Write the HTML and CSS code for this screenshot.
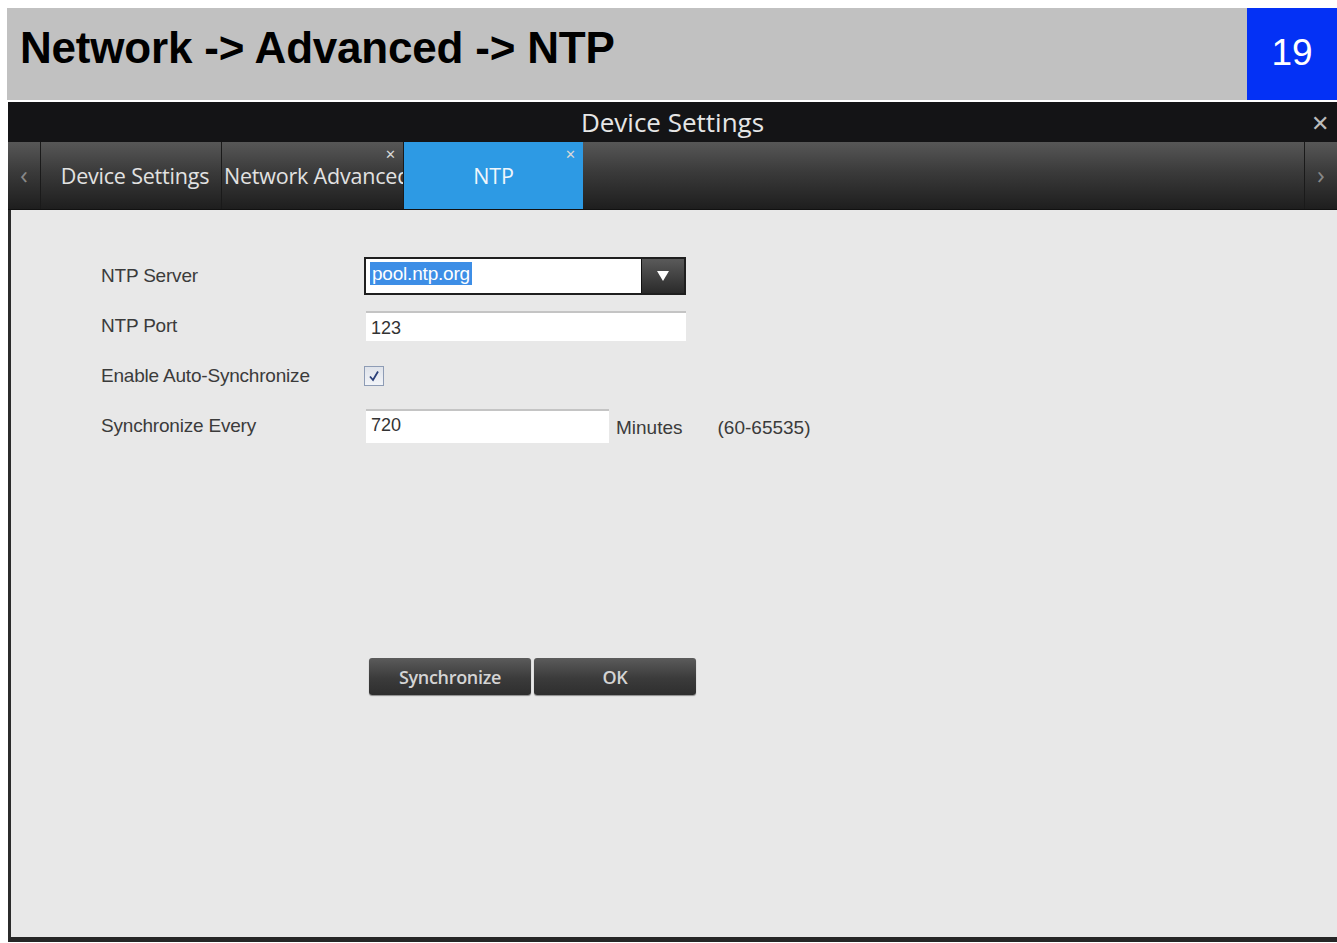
FILE: index.html
```html
<!DOCTYPE html>
<html lang="en">
<head>
  <meta charset="UTF-8" />
  <meta name="viewport" content="width=device-width, initial-scale=1.0"/>
  <title>Network -> Advanced -> NTP</title>
  <link rel="stylesheet" href="styles.css">
</head>
<body>
  <header class="slide-head">
    <h1>Network -&gt; Advanced -&gt; NTP</h1>
    <div class="page-no">19</div>
  </header>

  <div class="window">
    <div class="titlebar">
      <span class="title">Device Settings</span>
      <span class="close">&#x2715;</span>
    </div>

    <div class="tabbar">
      <div class="arrow">&#x2039;</div>
      <div class="tab tab-first">Device Settings</div>
      <div class="tab tab-left">Network Advanced<span class="tab-x">&#x2715;</span></div>
      <div class="tab active">NTP<span class="tab-x">&#x2715;</span></div>
      <div class="tab-fill"></div>
      <div class="arrow">&#x203A;</div>
    </div>

    <div class="content">
      <div class="form">
        <label>NTP Server</label>
        <div class="field">
          <div class="select">
            <span class="select-val"><span class="sel">pool.ntp.org</span></span>
            <span class="select-btn">
              <svg width="12" height="10" viewBox="0 0 12 10"><path d="M0 0 H12 L6 10 Z" fill="#fff"/></svg>
            </span>
          </div>
        </div>

        <label>NTP Port</label>
        <div class="field">
          <div class="input wide">123</div>
        </div>

        <label>Enable Auto-Synchronize</label>
        <div class="field">
          <span class="check">
            <svg width="12" height="12" viewBox="0 0 12 12"><path d="M2 6.5 L5 10 L10 1.5" fill="none" stroke="#2a3f78" stroke-width="1.8"/></svg>
          </span>
        </div>

        <label>Synchronize Every</label>
        <div class="field">
          <div class="input short">720</div>
          <span class="unit">Minutes</span>
          <span class="range">(60-65535)</span>
        </div>
      </div>

      <div class="actions">
        <button class="btn">Synchronize</button>
        <button class="btn">OK</button>
      </div>
    </div>
  </div>
</body>
</html>
```

FILE: styles.css
```css
body {
  margin: 8px 0 0 7px;
  background-color: #fff;
  font-family: 'Liberation Sans', Arial, sans-serif;
  overflow: hidden;
}

.slide-head {
  display: flex;
  height: 92px;
  background-color: #c1c1c1;
}

.slide-head h1 {
  flex: 1;
  margin: 0;
  padding: 15px 0 0 13px;
  font-size: 44px;
  font-weight: bold;
  letter-spacing: -0.2px;
  color: #000;
}

.page-no {
  width: 90px;
  background-color: #0431f5;
  color: #fff;
  font-size: 37px;
  text-align: center;
  line-height: 90px;
}

.window {
  margin-top: 2px;
  margin-left: 1px;
  background-color: #e8e8e8;
  border-left: 3px solid #2b2b2b;
  border-bottom: 5px solid #262626;
  font-family: 'Open Sans', 'Noto Sans', sans-serif;
}

.titlebar {
  position: relative;
  height: 40px;
  margin-left: -3px;
  background-color: #141416;
  color: #e6e6e6;
  text-align: center;
}

.titlebar .title {
  font-size: 26px;
  line-height: 40px;
}

.titlebar .close {
  position: absolute;
  right: 8px;
  top: 0;
  font-size: 22px;
  line-height: 40px;
  color: #bbb;
}

.tabbar {
  display: flex;
  height: 67px;
  margin-left: -3px;
  background: linear-gradient(#575757, #3a3a3a 45%, #1e1e1e);
  border-bottom: 1px solid #111;
}

.arrow {
  width: 32px;
  flex: none;
  border-right: 1px solid #1a1a1a;
  color: #888;
  font-size: 26px;
  line-height: 64px;
  text-align: center;
}

.tabbar .arrow:last-child {
  border-right: none;
  border-left: 1px solid #1a1a1a;
}

.tab {
  position: relative;
  width: 180px;
  flex: none;
  box-sizing: border-box;
  overflow: hidden;
  white-space: nowrap;
  border-right: 1px solid #1a1a1a;
  color: #e2e2e2;
  font-size: 21.5px;
  line-height: 68px;
  text-align: center;
  letter-spacing: -0.2px;
}

.tab-first {
  width: 181px;
  padding-left: 8px;
}

.tab-left {
  width: 182px;
  padding-left: 2px;
  text-align: left;
}

.tab.active {
  width: 179px;
  background-color: #2d9ae4;
  border-right: none;
  color: #f0f6fb;
  text-align: center;
}

.tab-x {
  position: absolute;
  top: 6px;
  right: 7px;
  font-size: 13px;
  line-height: 13px;
  color: #d8d8d8;
}

.tab-fill {
  flex: 1;
}

.content {
  height: 727px;
  padding: 41px 0 0 90px;
  box-sizing: border-box;
  font-family: 'Liberation Sans', Arial, sans-serif;
}

.form {
  display: grid;
  grid-template-columns: 263px auto;
  grid-auto-rows: 50px;
  align-items: center;
  color: #3b3b3b;
  font-size: 19px;
}

.form label {
  letter-spacing: -0.2px;
}

.field {
  display: flex;
  align-items: center;
}

.select {
  display: flex;
  width: 318px;
  height: 34px;
  border: 2px solid #1f1f1f;
  background-color: #fff;
}

.select-val {
  flex: 1;
  padding: 4px 0 0 4px;
  font-size: 19px;
}

.sel {
  background-color: #3d8ee6;
  color: #fff;
  padding: 1px 2px;
  letter-spacing: -0.2px;
}

.select-btn {
  display: flex;
  width: 42px;
  align-items: center;
  justify-content: center;
  background: linear-gradient(#5a5a5a, #2a2a2a);
  border-left: 1px solid #111;
}

.input {
  height: 30px;
  box-sizing: border-box;
  padding: 5px 0 0 5px;
  background-color: #fff;
  border-top: 2px solid #c4c4c4;
  color: #333;
  font-size: 18px;
}

.input.wide {
  width: 320px;
  margin-left: 2px;
}

.input.short {
  width: 243px;
  height: 34px;
  margin-left: 2px;
  padding-top: 4px;
}

.check {
  display: flex;
  width: 18px;
  height: 18px;
  align-items: center;
  justify-content: center;
  border: 1px solid #8e9cb5;
  background: linear-gradient(#dfe3ea, #f2f4f8);
}

.unit {
  margin-left: 7px;
  padding-top: 4px;
}

.range {
  margin-left: 35px;
  padding-top: 4px;
}

.actions {
  display: flex;
  gap: 3px;
  margin: 207px 0 0 268px;
}

.btn {
  width: 162px;
  height: 37px;
  border: none;
  border-radius: 3px;
  background: linear-gradient(#5b5b5b, #3b3b3b 55%, #2e2e2e);
  box-shadow: 0 1px 1px rgba(0, 0, 0, 0.4);
  color: #d4d4d4;
  font-family: 'Open Sans', 'Noto Sans', sans-serif;
  font-size: 18px;
  font-weight: 600;
  letter-spacing: -0.3px;
}
```
